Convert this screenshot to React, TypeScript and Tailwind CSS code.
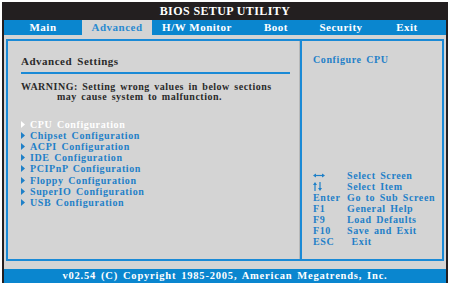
import React from "react";

const serif = { fontFamily: '"Liberation Serif", "DejaVu Serif", serif' };

const tabs = [
  { name: "Main", w: "w-[78px]", active: false },
  { name: "Advanced", w: "w-[70px]", active: true },
  { name: "H/W Monitor", w: "w-[90px]", active: false },
  { name: "Boot", w: "w-[68px]", active: false },
  { name: "Security", w: "w-[62px]", active: false },
  { name: "Exit", w: "w-[70px]", active: false },
];

const items = [
  "CPU Configuration",
  "Chipset Configuration",
  "ACPI Configuration",
  "IDE Configuration",
  "PCIPnP Configuration",
  "Floppy Configuration",
  "SuperIO Configuration",
  "USB Configuration",
];

const LR = (
  <svg width="12" height="7" viewBox="0 0 12 7" className="mt-[2px]">
    <path d="M1 3.5H11" stroke="#1f80c8" strokeWidth="1.2" />
    <path d="M0 3.5L3 1.5V5.5Z M12 3.5L9 1.5V5.5Z" fill="#1f80c8" />
  </svg>
);
const UD = (
  <svg width="9" height="9" viewBox="0 0 9 9" className="mt-[1px]">
    <path d="M2 2V9 M7 0V7" stroke="#1f80c8" strokeWidth="1.2" />
    <path d="M2 0L0 3H4Z M7 9L5 6H9Z" fill="#1f80c8" />
  </svg>
);

const keys: [React.ReactNode, string][] = [
  [LR, "Select Screen"],
  [UD, "Select Item"],
  ["Enter", "Go to Sub Screen"],
  ["F1", "General Help"],
  ["F9", "Load Defaults"],
  ["F10", "Save and Exit"],
  ["ESC", " Exit"],
];

function Tri({ white }: { white: boolean }) {
  return (
    <svg width="4" height="7" viewBox="0 0 4 7" className="mr-[5px] shrink-0">
      <polygon points="0,0 4,3.5 0,7" fill={white ? "#ffffff" : "#1f80c8"} />
    </svg>
  );
}

export default function App() {
  return (
    <div className="w-[450px] h-[288px] bg-white pt-[2px] pl-[2px]" style={serif}>
      <div className="w-[446px] h-[281px] bg-[#d4d4d4] border-x-2 border-[#231f20] flex flex-col font-bold">
        <div className="h-[18px] bg-[#231f20] flex items-center justify-center text-white text-[12px] tracking-[0.4px]">
          BIOS SETUP UTILITY
        </div>
        <div className="h-[15px] bg-[#0a86cf] flex items-stretch text-[11px] tracking-[0.5px]">
          {tabs.map((t) => (
            <div
              key={t.name}
              className={`${t.w} flex items-center justify-center ${t.active ? "bg-[#d4d4d4] text-[#2a8ad0]" : "text-white"}`}
            >
              {t.name}
            </div>
          ))}
        </div>
        <div className="flex-1 pt-[4px] px-[2px] pb-[8px]">
          <div className="h-full border-2 border-[#1a8ad6] flex">
            <div className="w-[291px] pl-[13px] pt-[13px] pr-[9px] flex flex-col">
              <div className="text-[11px] tracking-[0.5px] leading-[14px] text-[#2a2a2a] [word-spacing:2px]">
                Advanced Settings
              </div>
              <div className="h-[1.5px] bg-[#1a8ad6] mt-[4px]" />
              <div className="mt-[8px] text-[10px] leading-[10px] text-[#2a2a2a] tracking-[0.5px] [word-spacing:1.5px]">
                <div>WARNING: Setting wrong values in below sections</div>
                <div className="pl-[36px]">may cause system to malfunction.</div>
              </div>
              <div className="mt-[17px] text-[10px] leading-[11.2px] tracking-[0.6px] [word-spacing:1.5px]">
                {items.map((it, i) => (
                  <div key={it} className={`flex items-center ${i === 0 ? "text-white" : "text-[#1f80c8]"}`}>
                    <Tri white={i === 0} />
                    {it}
                  </div>
                ))}
              </div>
            </div>
            <div className="w-[2px] bg-[#1a8ad6] border-l border-[#b8b8b8] box-content" />
            <div className="flex-1 pl-[11px] pt-[13px] flex flex-col text-[10px] text-[#1f80c8] tracking-[0.6px] [word-spacing:1.5px]">
              <div className="leading-[12px]">Configure CPU</div>
              <div className="mt-[104px] leading-[11px]">
                {keys.map(([k, d], i) => (
                  <div key={i} className="flex whitespace-pre h-[11px]">
                    <div className="w-[34px] flex items-start">{k}</div>
                    <div>{d}</div>
                  </div>
                ))}
              </div>
            </div>
          </div>
        </div>
        <div className="h-[14px] bg-[#0a86cf] flex items-center justify-center text-white text-[10.5px] tracking-[0.8px] [word-spacing:1.5px]">
          v02.54 (C) Copyright 1985-2005, American Megatrends, Inc.
        </div>
      </div>
    </div>
  );
}
